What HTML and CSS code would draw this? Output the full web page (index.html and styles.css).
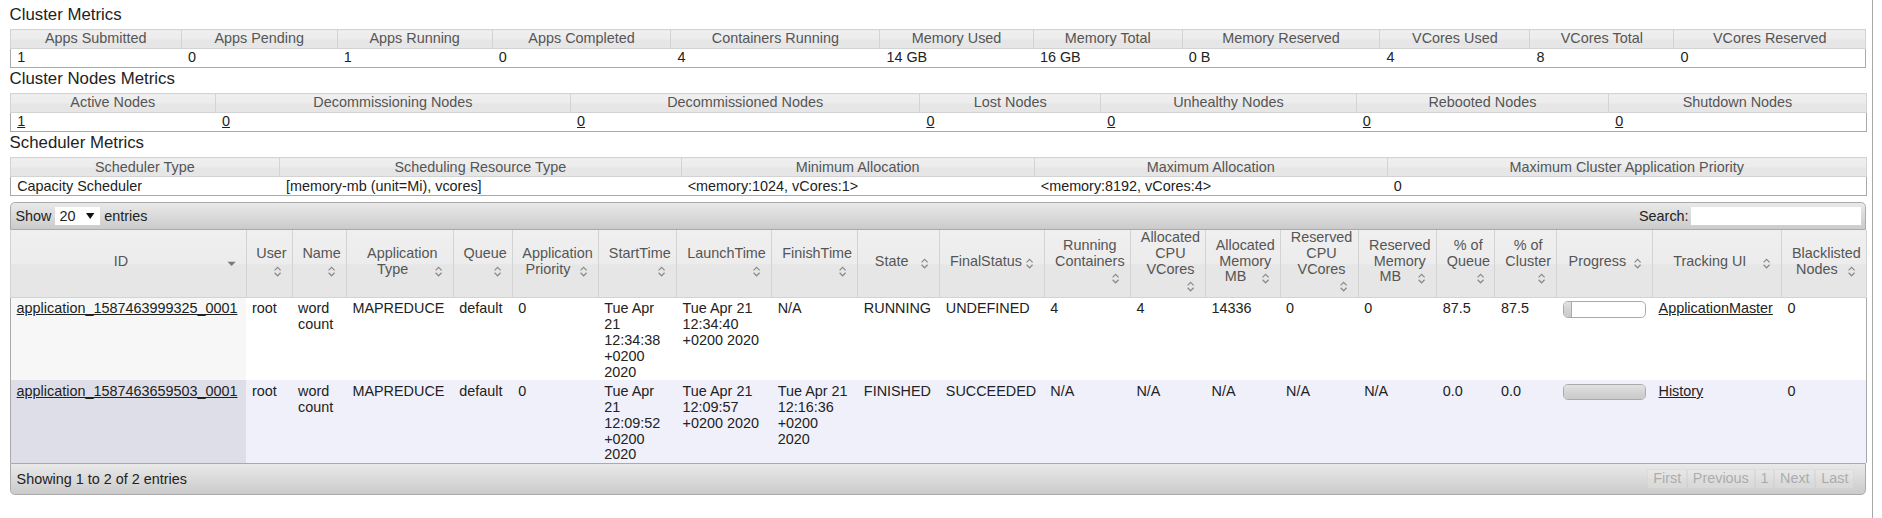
FILE: index.html
```html
<!DOCTYPE html>
<html lang="en">
<head>
<meta charset="utf-8">
<title>All Applications</title>
<link rel="stylesheet" href="styles.css">
</head>
<body>
<div class="page">
  <h3 class="title">Cluster Metrics</h3>
  <table class="metrics">
    <colgroup>
      <col class="c143"><col class="c130"><col class="c129"><col class="c149"><col class="c174"><col class="c128"><col class="c124"><col class="c165"><col class="c125"><col class="c120"><col class="c160">
    </colgroup>
    <thead>
      <tr><th>Apps Submitted</th><th>Apps Pending</th><th>Apps Running</th><th>Apps Completed</th><th>Containers Running</th><th>Memory Used</th><th>Memory Total</th><th>Memory Reserved</th><th>VCores Used</th><th>VCores Total</th><th>VCores Reserved</th></tr>
    </thead>
    <tbody>
      <tr><td>1</td><td>0</td><td>1</td><td>0</td><td>4</td><td>14 GB</td><td>16 GB</td><td>0 B</td><td>4</td><td>8</td><td>0</td></tr>
    </tbody>
  </table>

  <h3 class="title">Cluster Nodes Metrics</h3>
  <table class="metrics">
    <colgroup>
      <col class="c171"><col class="c296"><col class="c291"><col class="c151"><col class="c213"><col class="c210"><col class="c215">
    </colgroup>
    <thead>
      <tr><th>Active Nodes</th><th>Decommissioning Nodes</th><th>Decommissioned Nodes</th><th>Lost Nodes</th><th>Unhealthy Nodes</th><th>Rebooted Nodes</th><th>Shutdown Nodes</th></tr>
    </thead>
    <tbody>
      <tr><td><a href="#">1</a></td><td><a href="#">0</a></td><td><a href="#">0</a></td><td><a href="#">0</a></td><td><a href="#">0</a></td><td><a href="#">0</a></td><td><a href="#">0</a></td></tr>
    </tbody>
  </table>

  <h3 class="title">Scheduler Metrics</h3>
  <table class="metrics">
    <colgroup>
      <col class="c224"><col class="c335"><col class="c294"><col class="c294"><col class="c399">
    </colgroup>
    <thead>
      <tr><th>Scheduler Type</th><th>Scheduling Resource Type</th><th>Minimum Allocation</th><th>Maximum Allocation</th><th>Maximum Cluster Application Priority</th></tr>
    </thead>
    <tbody>
      <tr><td>Capacity Scheduler</td><td>[memory-mb (unit=Mi), vcores]</td><td>&lt;memory:1024, vCores:1&gt;</td><td>&lt;memory:8192, vCores:4&gt;</td><td>0</td></tr>
    </tbody>
  </table>

  <div class="dt-wrapper">
    <div class="dt-bar dt-top">
      <div class="dt-length">Show <span class="select"><span class="sel-val">20</span><svg class="sel-caret" width="7" height="5" viewBox="0 0 7 5"><path d="M0 0H7L3.5 5Z" fill="#111"/></svg></span> entries</div>
      <label class="dt-filter">Search:<input class="search" type="text" aria-label="Search"></label>
    </div>

    <table class="apps">
      <colgroup>
        <col class="a1"><col class="a2"><col class="a3"><col class="a4"><col class="a5"><col class="a6"><col class="a7"><col class="a8"><col class="a9"><col class="a10"><col class="a11"><col class="a12"><col class="a13"><col class="a14"><col class="a15"><col class="a16"><col class="a17"><col class="a18"><col class="a19"><col class="a20"><col class="a21">
      </colgroup>
      <thead>
        <tr>
          <th><div class="l"><span class="si"><svg width="16" height="16" viewBox="0 0 16 16"><path d="M4.5 6.5H11.5L8 10Z" fill="#7a7a7a"/></svg></span>ID</div></th>
          <th><div class="l">User</div><div class="il"><span class="si"><svg width="16" height="16" viewBox="0 0 16 16"><path d="M5.5 7 8 4.5 10.5 7M5.5 9 8 11.5 10.5 9" fill="none" stroke="#8a8a8a"/></svg></span></div></th>
          <th><div class="l">Name</div><div class="il"><span class="si"><svg width="16" height="16" viewBox="0 0 16 16"><path d="M5.5 7 8 4.5 10.5 7M5.5 9 8 11.5 10.5 9" fill="none" stroke="#8a8a8a"/></svg></span></div></th>
          <th><div class="l">Application</div><div class="l"><span class="si"><svg width="16" height="16" viewBox="0 0 16 16"><path d="M5.5 7 8 4.5 10.5 7M5.5 9 8 11.5 10.5 9" fill="none" stroke="#8a8a8a"/></svg></span>Type</div></th>
          <th><div class="l">Queue</div><div class="il"><span class="si"><svg width="16" height="16" viewBox="0 0 16 16"><path d="M5.5 7 8 4.5 10.5 7M5.5 9 8 11.5 10.5 9" fill="none" stroke="#8a8a8a"/></svg></span></div></th>
          <th><div class="l">Application</div><div class="l"><span class="si"><svg width="16" height="16" viewBox="0 0 16 16"><path d="M5.5 7 8 4.5 10.5 7M5.5 9 8 11.5 10.5 9" fill="none" stroke="#8a8a8a"/></svg></span>Priority</div></th>
          <th><div class="l">StartTime</div><div class="il"><span class="si"><svg width="16" height="16" viewBox="0 0 16 16"><path d="M5.5 7 8 4.5 10.5 7M5.5 9 8 11.5 10.5 9" fill="none" stroke="#8a8a8a"/></svg></span></div></th>
          <th><div class="l">LaunchTime</div><div class="il"><span class="si"><svg width="16" height="16" viewBox="0 0 16 16"><path d="M5.5 7 8 4.5 10.5 7M5.5 9 8 11.5 10.5 9" fill="none" stroke="#8a8a8a"/></svg></span></div></th>
          <th><div class="l">FinishTime</div><div class="il"><span class="si"><svg width="16" height="16" viewBox="0 0 16 16"><path d="M5.5 7 8 4.5 10.5 7M5.5 9 8 11.5 10.5 9" fill="none" stroke="#8a8a8a"/></svg></span></div></th>
          <th><div class="l"><span class="si"><svg width="16" height="16" viewBox="0 0 16 16"><path d="M5.5 7 8 4.5 10.5 7M5.5 9 8 11.5 10.5 9" fill="none" stroke="#8a8a8a"/></svg></span>State</div></th>
          <th><div class="l"><span class="si"><svg width="16" height="16" viewBox="0 0 16 16"><path d="M5.5 7 8 4.5 10.5 7M5.5 9 8 11.5 10.5 9" fill="none" stroke="#8a8a8a"/></svg></span>FinalStatus</div></th>
          <th><div class="l">Running</div><div class="l">Containers</div><div class="il"><span class="si"><svg width="16" height="16" viewBox="0 0 16 16"><path d="M5.5 7 8 4.5 10.5 7M5.5 9 8 11.5 10.5 9" fill="none" stroke="#8a8a8a"/></svg></span></div></th>
          <th><div class="l">Allocated</div><div class="l">CPU</div><div class="l">VCores</div><div class="il"><span class="si"><svg width="16" height="16" viewBox="0 0 16 16"><path d="M5.5 7 8 4.5 10.5 7M5.5 9 8 11.5 10.5 9" fill="none" stroke="#8a8a8a"/></svg></span></div></th>
          <th><div class="l">Allocated</div><div class="l">Memory</div><div class="l"><span class="si"><svg width="16" height="16" viewBox="0 0 16 16"><path d="M5.5 7 8 4.5 10.5 7M5.5 9 8 11.5 10.5 9" fill="none" stroke="#8a8a8a"/></svg></span>MB</div></th>
          <th><div class="l">Reserved</div><div class="l">CPU</div><div class="l">VCores</div><div class="il"><span class="si"><svg width="16" height="16" viewBox="0 0 16 16"><path d="M5.5 7 8 4.5 10.5 7M5.5 9 8 11.5 10.5 9" fill="none" stroke="#8a8a8a"/></svg></span></div></th>
          <th><div class="l">Reserved</div><div class="l">Memory</div><div class="l"><span class="si"><svg width="16" height="16" viewBox="0 0 16 16"><path d="M5.5 7 8 4.5 10.5 7M5.5 9 8 11.5 10.5 9" fill="none" stroke="#8a8a8a"/></svg></span>MB</div></th>
          <th><div class="l">% of</div><div class="l">Queue</div><div class="il"><span class="si"><svg width="16" height="16" viewBox="0 0 16 16"><path d="M5.5 7 8 4.5 10.5 7M5.5 9 8 11.5 10.5 9" fill="none" stroke="#8a8a8a"/></svg></span></div></th>
          <th><div class="l">% of</div><div class="l">Cluster</div><div class="il"><span class="si"><svg width="16" height="16" viewBox="0 0 16 16"><path d="M5.5 7 8 4.5 10.5 7M5.5 9 8 11.5 10.5 9" fill="none" stroke="#8a8a8a"/></svg></span></div></th>
          <th><div class="l"><span class="si"><svg width="16" height="16" viewBox="0 0 16 16"><path d="M5.5 7 8 4.5 10.5 7M5.5 9 8 11.5 10.5 9" fill="none" stroke="#8a8a8a"/></svg></span>Progress</div></th>
          <th><div class="l"><span class="si"><svg width="16" height="16" viewBox="0 0 16 16"><path d="M5.5 7 8 4.5 10.5 7M5.5 9 8 11.5 10.5 9" fill="none" stroke="#8a8a8a"/></svg></span>Tracking UI</div></th>
          <th><div class="l">Blacklisted</div><div class="l"><span class="si"><svg width="16" height="16" viewBox="0 0 16 16"><path d="M5.5 7 8 4.5 10.5 7M5.5 9 8 11.5 10.5 9" fill="none" stroke="#8a8a8a"/></svg></span>Nodes</div></th>
        </tr>
      </thead>
      <tbody>
        <tr class="odd">
          <td class="sorted"><a href="#">application_1587463999325_0001</a></td>
          <td>root</td>
          <td>word count</td>
          <td>MAPREDUCE</td>
          <td>default</td>
          <td>0</td>
          <td>Tue Apr 21 12:34:38 +0200 2020</td>
          <td>Tue Apr 21 12:34:40 +0200 2020</td>
          <td>N/A</td>
          <td>RUNNING</td>
          <td>UNDEFINED</td>
          <td>4</td>
          <td>4</td>
          <td>14336</td>
          <td>0</td>
          <td>0</td>
          <td>87.5</td>
          <td>87.5</td>
          <td><div class="pbar" title="10%"><div class="pfill" style="width:10%"></div></div></td>
          <td><a href="#">ApplicationMaster</a></td>
          <td>0</td>
        </tr>
        <tr class="even">
          <td class="sorted"><a href="#">application_1587463659503_0001</a></td>
          <td>root</td>
          <td>word count</td>
          <td>MAPREDUCE</td>
          <td>default</td>
          <td>0</td>
          <td>Tue Apr 21 12:09:52 +0200 2020</td>
          <td>Tue Apr 21 12:09:57 +0200 2020</td>
          <td>Tue Apr 21 12:16:36 +0200 2020</td>
          <td>FINISHED</td>
          <td>SUCCEEDED</td>
          <td>N/A</td>
          <td>N/A</td>
          <td>N/A</td>
          <td>N/A</td>
          <td>N/A</td>
          <td>0.0</td>
          <td>0.0</td>
          <td><div class="pbar" title="100%"><div class="pfill full" style="width:100%"></div></div></td>
          <td><a href="#">History</a></td>
          <td>0</td>
        </tr>
      </tbody>
    </table>

    <div class="dt-bar dt-bottom">
      <div class="dt-info">Showing 1 to 2 of 2 entries</div>
      <div class="dt-paginate">
        <span class="pbtn">First</span><span class="pbtn">Previous</span><span class="pbtn">1</span><span class="pbtn">Next</span><span class="pbtn">Last</span>
      </div>
    </div>
  </div>
</div>
</body>
</html>
```

FILE: styles.css
```css
html {
  zoom: 1.2;
  background: #fff;
}

body {
  margin: 0;
  font-family: "Liberation Sans", Arial, sans-serif;
  font-size: 12px;
  color: #222;
  background: #fff;
}

a {
  color: #222;
  text-decoration: underline;
}

.page {
  margin-left: 8px;
  width: 1553px;
  height: 431.6px;
  box-sizing: border-box;
  border-right: 1px solid #a8a8a8;
  padding-top: 4.3px;
  overflow: hidden;
}

.title {
  margin: 0;
  font-size: 14px;
  line-height: 16px;
  font-weight: normal;
  color: #222;
}

/* ---------- metrics tables ---------- */
.metrics {
  width: 1547px;
  table-layout: fixed;
  border-collapse: collapse;
  border: 1px solid #aaa;
  margin: 4px 0 1px;
}

.metrics th {
  font-weight: normal;
  color: #555;
  background: linear-gradient(to bottom, #efefef 0%, #ececec 50%, #e6e6e6 52%, #e6e6e6 100%);
  border: 1px solid #d3d3d3;
  line-height: 13px;
  padding: 1px 2px;
  text-align: center;
  white-space: nowrap;
  overflow: hidden;
}

.metrics td {
  line-height: 13px;
  padding: 1px 4px 1px 5.5px;
  text-align: left;
  white-space: nowrap;
  overflow: hidden;
}

.c143 { width: 142.7px; }
.c130 { width: 129.8px; }
.c129 { width: 129.3px; }
.c149 { width: 148.9px; }
.c174 { width: 174.1px; }
.c128 { width: 127.9px; }
.c124 { width: 124.1px; }
.c165 { width: 164.8px; }
.c125 { width: 124.9px; }
.c120 { width: 120px; }
.c160 { width: 159.9px; }

.c171 { width: 171.1px; }
.c296 { width: 295.9px; }
.c291 { width: 291.1px; }
.c151 { width: 150.7px; }
.c213 { width: 213px; }
.c210 { width: 210.3px; }
.c215 { width: 214.8px; }

.c224 { width: 224.5px; }
.c335 { width: 334.7px; }
.c294 { width: 294.2px; }
.c399 { width: 399.2px; }

/* ---------- data table ---------- */
.dt-wrapper {
  width: 1547px;
  margin-top: 4.7px;
}

.dt-bar {
  display: flex;
  align-items: center;
  justify-content: space-between;
  box-sizing: border-box;
  width: 100%;
  border: 1px solid #aaa;
  background: linear-gradient(to bottom, #e9e9e9 0%, #dadada 50%, #cbcbcb 100%);
  color: #222;
  line-height: 15px;
}

.dt-top {
  border-radius: 4px 4px 0 0;
  padding: 3.2px 3px 3.4px 4px;
}

.dt-bottom {
  border-top: 1px solid #aaa;
  border-radius: 0 0 4px 4px;
  padding: 4px 9px 4.3px 5px;
}

.select {
  display: inline-flex;
  align-items: center;
  box-sizing: border-box;
  width: 37.4px;
  height: 15px;
  padding-left: 3.4px;
  background: #fff;
  vertical-align: top;
}

.sel-val {
  flex: 1;
}

.sel-caret {
  margin-right: 4.5px;
}

.dt-filter {
  display: flex;
  align-items: center;
}

.search {
  width: 142px;
  height: 15px;
  box-sizing: border-box;
  margin: 0 0 0 2px;
  padding: 0 2px;
  border: 0;
  background: #fff;
  font: inherit;
}

.apps {
  width: 1547px;
  table-layout: fixed;
  border-collapse: collapse;
  border-left: 1px solid #aaa;
  border-right: 1px solid #aaa;
}

.a1 { width: 196.6px; }
.a2 { width: 38.4px; }
.a3 { width: 45.3px; }
.a4 { width: 89.1px; }
.a5 { width: 49px; }
.a6 { width: 71.7px; }
.a7 { width: 65.3px; }
.a8 { width: 79.3px; }
.a9 { width: 71.8px; }
.a10 { width: 68.3px; }
.a11 { width: 87.1px; }
.a12 { width: 71.8px; }
.a13 { width: 62.6px; }
.a14 { width: 62.1px; }
.a15 { width: 65.1px; }
.a16 { width: 65.4px; }
.a17 { width: 48.6px; }
.a18 { width: 51.3px; }
.a19 { width: 80px; }
.a20 { width: 107.4px; }
.a21 { width: 71px; }

.apps th {
  font-weight: normal;
  color: #555;
  background: linear-gradient(to bottom, #efefef 0%, #ececec 50%, #e6e6e6 52%, #e6e6e6 100%);
  border: 1px solid #d3d3d3;
  border-top: 0;
  padding: 0 4px 0 8px;
  line-height: 13.2px;
  vertical-align: middle;
  overflow: hidden;
}

.l {
  text-align: center;
  white-space: nowrap;
}

.il {
  height: 16px;
}

.si {
  float: right;
  width: 16px;
  height: 16px;
}

.si svg {
  display: block;
}

.apps td {
  padding: 3px 4.5px 0 5px;
  line-height: 13.2px;
  vertical-align: top;
  overflow: hidden;
}

.apps tr.odd td { background: #fff; }
.apps tr.odd td.sorted { background: #f7f7f7; }
.apps tr.even td { background: #f0f0fb; }
.apps tr.even td.sorted { background: #dedee9; }

.pbar {
  width: 68px;
  height: 12px;
  border: 1px solid #aaa;
  border-radius: 4px;
  background: #fff;
  overflow: hidden;
}

.pfill {
  height: 100%;
  box-sizing: border-box;
  border-right: 1px solid #aaa;
  background: linear-gradient(to bottom, #e2e2e2 0%, #d4d4d4 50%, #cacaca 100%);
}

.pfill.full {
  border-right: 0;
}

.dt-paginate {
  display: flex;
}

.pbtn {
  display: block;
  padding: 1px 4px;
  border: 1px solid #d3d3d3;
  background: linear-gradient(to bottom, #efefef 0%, #ececec 50%, #e6e6e6 52%, #e6e6e6 100%);
  color: #555;
  line-height: 13.2px;
  opacity: 0.35;
}
```
